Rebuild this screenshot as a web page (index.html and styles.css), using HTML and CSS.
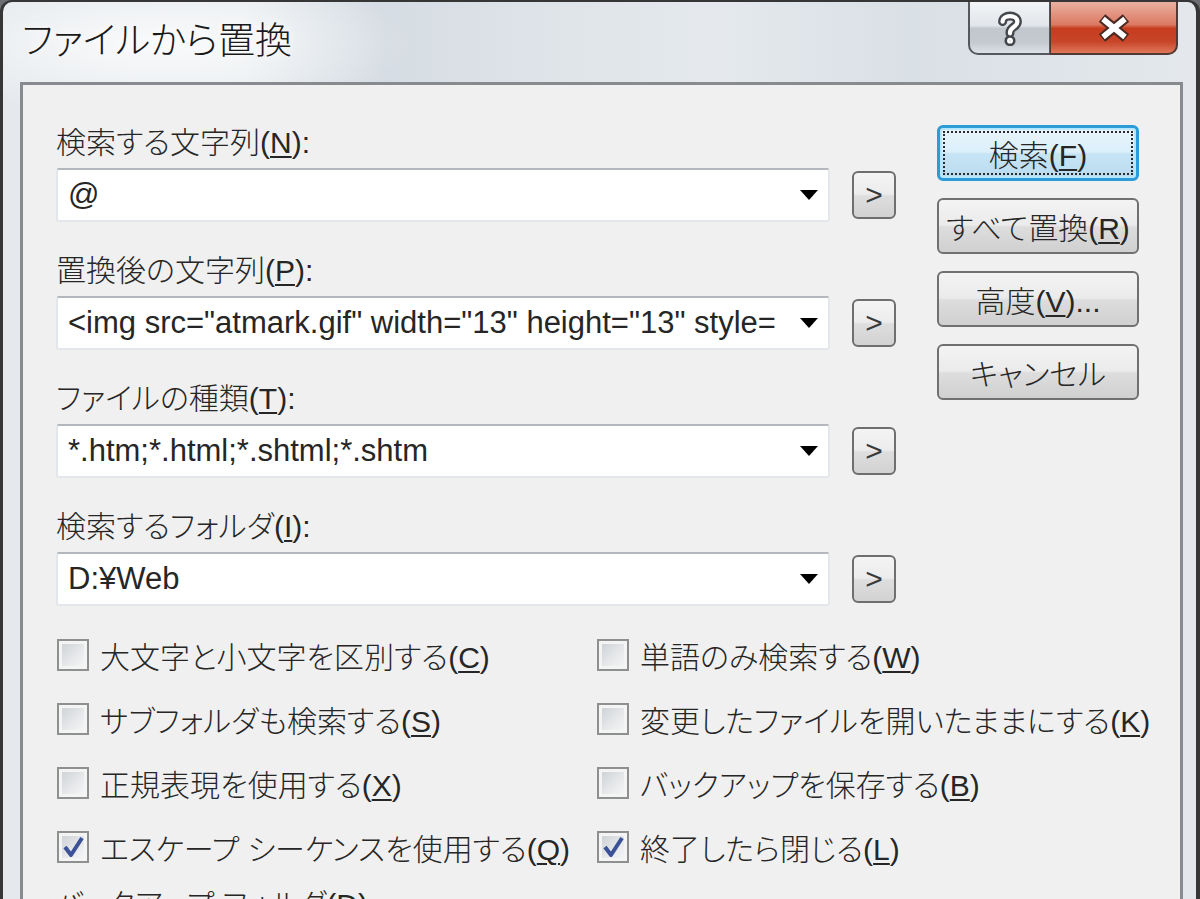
FILE: index.html
```html
<!DOCTYPE html>
<html lang="ja">
	<head>
		<meta charset="utf-8" />
		<title>ファイルから置換</title>
		<link rel="stylesheet" href="styles.css">
	</head>
	<body>
		<div class="window">
			<div class="titlebar">
				<h1 class="title">ファイルから置換</h1>
				<div class="caption">
					<button class="cap cap-help">
						<svg width="26" height="36" viewBox="0 0 24 34">
							<g fill="none" stroke-linecap="round">
								<path d="M5 11C5 4 19 4 19 11C19 16 12 16 12 21V22" stroke="#44484d" stroke-width="8.5"/>
								<circle cx="12" cy="29" r="1.5" stroke="#44484d" stroke-width="7.5"/>
								<path d="M5 11C5 4 19 4 19 11C19 16 12 16 12 21V22" stroke="#fff" stroke-width="4"/>
								<circle cx="12" cy="29" r="1" stroke="#fff" stroke-width="3.5"/>
							</g>
						</svg>
					</button>
					<button class="cap cap-close">
						<svg width="34" height="28" viewBox="0 0 34 28">
							<g fill="none">
								<path d="M5 4L29 24M29 4L5 24" stroke="#4a2a22" stroke-width="10"/>
								<path d="M6 5L28 23M28 5L6 23" stroke="#fff" stroke-width="5.5"/>
							</g>
						</svg>
					</button>
				</div>
			</div>

			<div class="client">
				<div class="top">
					<div class="fields">
						<div class="field">
							<div class="label">検索する文字列(<u>N</u>):</div>
							<div class="row">
								<div class="combo"><span class="value">@</span><span class="arrow"></span></div>
								<button class="more">&gt;</button>
							</div>
						</div>
						<div class="field">
							<div class="label">置換後の文字列(<u>P</u>):</div>
							<div class="row">
								<div class="combo"><span class="value">&lt;img src="atmark.gif" width="13" height="13" style=</span><span class="arrow"></span></div>
								<button class="more">&gt;</button>
							</div>
						</div>
						<div class="field">
							<div class="label">ファイルの種類(<u>T</u>):</div>
							<div class="row">
								<div class="combo"><span class="value">*.htm;*.html;*.shtml;*.shtm</span><span class="arrow"></span></div>
								<button class="more">&gt;</button>
							</div>
						</div>
						<div class="field">
							<div class="label">検索するフォルダ(<u>I</u>):</div>
							<div class="row">
								<div class="combo"><span class="value">D:¥Web</span><span class="arrow"></span></div>
								<button class="more">&gt;</button>
							</div>
						</div>
					</div>

					<div class="actions">
						<button class="btn default">検索(<u>F</u>)</button>
						<button class="btn">すべて置換(<u>R</u>)</button>
						<button class="btn">高度(<u>V</u>)...</button>
						<button class="btn">キャンセル</button>
					</div>
				</div>

				<div class="options">
					<div class="check"><span class="box"></span><span>大文字と小文字を区別する(<u>C</u>)</span></div>
					<div class="check"><span class="box"></span><span>単語のみ検索する(<u>W</u>)</span></div>
					<div class="check"><span class="box"></span><span>サブフォルダも検索する(<u>S</u>)</span></div>
					<div class="check"><span class="box"></span><span>変更したファイルを開いたままにする(<u>K</u>)</span></div>
					<div class="check"><span class="box"></span><span>正規表現を使用する(<u>X</u>)</span></div>
					<div class="check"><span class="box"></span><span>バックアップを保存する(<u>B</u>)</span></div>
					<div class="check"><span class="box"><svg width="28" height="28" viewBox="0 0 28 28"><path d="M6 14L12 22L23 5" fill="none" stroke="#3b5396" stroke-width="4" stroke-linejoin="round"/></svg></span><span>エスケープ シーケンスを使用する(<u>Q</u>)</span></div>
					<div class="check"><span class="box"><svg width="28" height="28" viewBox="0 0 28 28"><path d="M6 14L12 22L23 5" fill="none" stroke="#3b5396" stroke-width="4" stroke-linejoin="round"/></svg></span><span>終了したら閉じる(<u>L</u>)</span></div>
				</div>

				<div class="label backup">バックアップ フォルダ(<u>D</u>):</div>
			</div>
		</div>
	</body>
</html>
```

FILE: styles.css
```css
*{margin:0;padding:0;box-sizing:border-box;}
body{background:#6b6e72;font-family:"Liberation Sans","Noto Sans CJK JP",sans-serif;font-weight:300;color:#262626;overflow:hidden;}
u{text-underline-offset:3px;text-decoration-thickness:2px;}
button{font-family:inherit;font-weight:inherit;color:inherit;cursor:default;}

/* window frame */
.window
{
	width:1200px;
	height:899px;
	border:solid #363636;
	border-width:2px 4px 0 3px;
	border-radius:12px 12px 0 0;
	background:
		radial-gradient(ellipse 260px 70px at 150px 42px,rgba(255,255,255,.75),rgba(255,255,255,0)),
		linear-gradient(90deg,#e5e9ed 0%,#e9edf0 20%,#d5dce3 32%,#dfe4e9 46%,#e5e9ed 60%,#d9e0e6 76%,#e4e8ec 100%);
	overflow:hidden;
	display:flex;
	flex-direction:column;
}
.titlebar{height:80px;flex:none;display:flex;align-items:flex-start;}
.title
{
	font-size:37px;
	font-weight:300;
	line-height:80px;
	padding-left:19px;
	color:#1a1a1a;
	font-feature-settings:"palt";
	text-shadow:0 0 8px #fff,0 0 16px #fff;
}
.caption{margin-left:auto;margin-right:18px;display:flex;height:53px;}
.cap{border:2px solid #55595e;border-top:none;display:flex;align-items:center;justify-content:center;}
.cap-help
{
	width:82px;
	border-right-width:1px;
	border-radius:0 0 0 10px;
	background:linear-gradient(#f2f4f6 0%,#e2e6ea 46%,#c2c7cd 52%,#c4c9cf 78%,#dde1e5 100%);
}
.cap-close
{
	width:128px;
	border-left-width:1px;
	border-color:#4f3a35;
	border-radius:0 0 10px 0;
	background:linear-gradient(#eab0a1 0%,#dc7a63 44%,#c63c1f 52%,#c8452a 78%,#e0785a 100%);
}

/* client area */
.client
{
	flex:1;
	margin:0 13px 0 17px;
	border:3px solid #878a8e;
	border-bottom:none;
	background:#f0f0f0;
	padding:38px 41px 0 33px;
}
.top{display:flex;gap:41px;}
.fields{width:840px;display:flex;flex-direction:column;gap:29px;}
.field{display:flex;flex-direction:column;gap:5px;}
.label{font-size:30px;line-height:40px;white-space:nowrap;font-feature-settings:"palt";}
.row{display:flex;align-items:center;gap:22px;}
.combo
{
	width:774px;
	height:54px;
	background:#fff;
	border:2px solid #e3e7eb;
	border-top-color:#b4b8bd;
	border-radius:3px;
	display:flex;
	align-items:center;
	padding:0 10px;
}
.value{flex:1;font-size:31px;white-space:nowrap;overflow:hidden;margin-right:12px;}
.arrow{flex:none;width:0;height:0;border-left:9px solid transparent;border-right:9px solid transparent;border-top:10px solid #000;}
.more
{
	width:44px;
	height:48px;
	border:2px solid #6f6f6f;
	border-radius:6px;
	background:linear-gradient(#f4f4f4 0%,#ececec 48%,#dedede 52%,#d2d2d2 100%);
	font-size:30px;
	color:#3a3a3a;
	line-height:1;
}

/* command buttons */
.actions{width:202px;display:flex;flex-direction:column;gap:17px;padding-top:2px;}
.btn
{
	height:56px;
	border:2px solid #707070;
	border-radius:6px;
	background:linear-gradient(#f3f3f3 0%,#ebebeb 48%,#dddddd 52%,#d0d0d0 100%);
	font-size:30px;
	white-space:nowrap;
	font-feature-settings:"palt";
}
.btn.default
{
	border:3px solid #2c9bd8;
	box-shadow:inset 0 0 0 2px #b6e6fb;
	background:linear-gradient(#e9f5fc 0%,#dbeffa 48%,#c6e4f5 52%,#b9dbef 100%);
	outline:2px dotted #2a2a2a;
	outline-offset:-8px;
}

/* check boxes */
.options{display:grid;grid-template-columns:540px 1fr;grid-auto-rows:64px;margin-top:17px;padding-left:1px;}
.check{display:flex;align-items:center;gap:11px;font-size:30px;white-space:nowrap;font-feature-settings:"palt";}
.box
{
	width:32px;
	height:32px;
	flex:none;
	border:2px solid #8e8f8f;
	background:linear-gradient(135deg,#c9cdd2 0%,#e6e8ea 55%,#f8f8f8 100%);
	box-shadow:inset 0 0 0 3px #f4f4f4;
	display:flex;
	align-items:center;
	justify-content:center;
}
.backup{margin-top:6px;}
```
